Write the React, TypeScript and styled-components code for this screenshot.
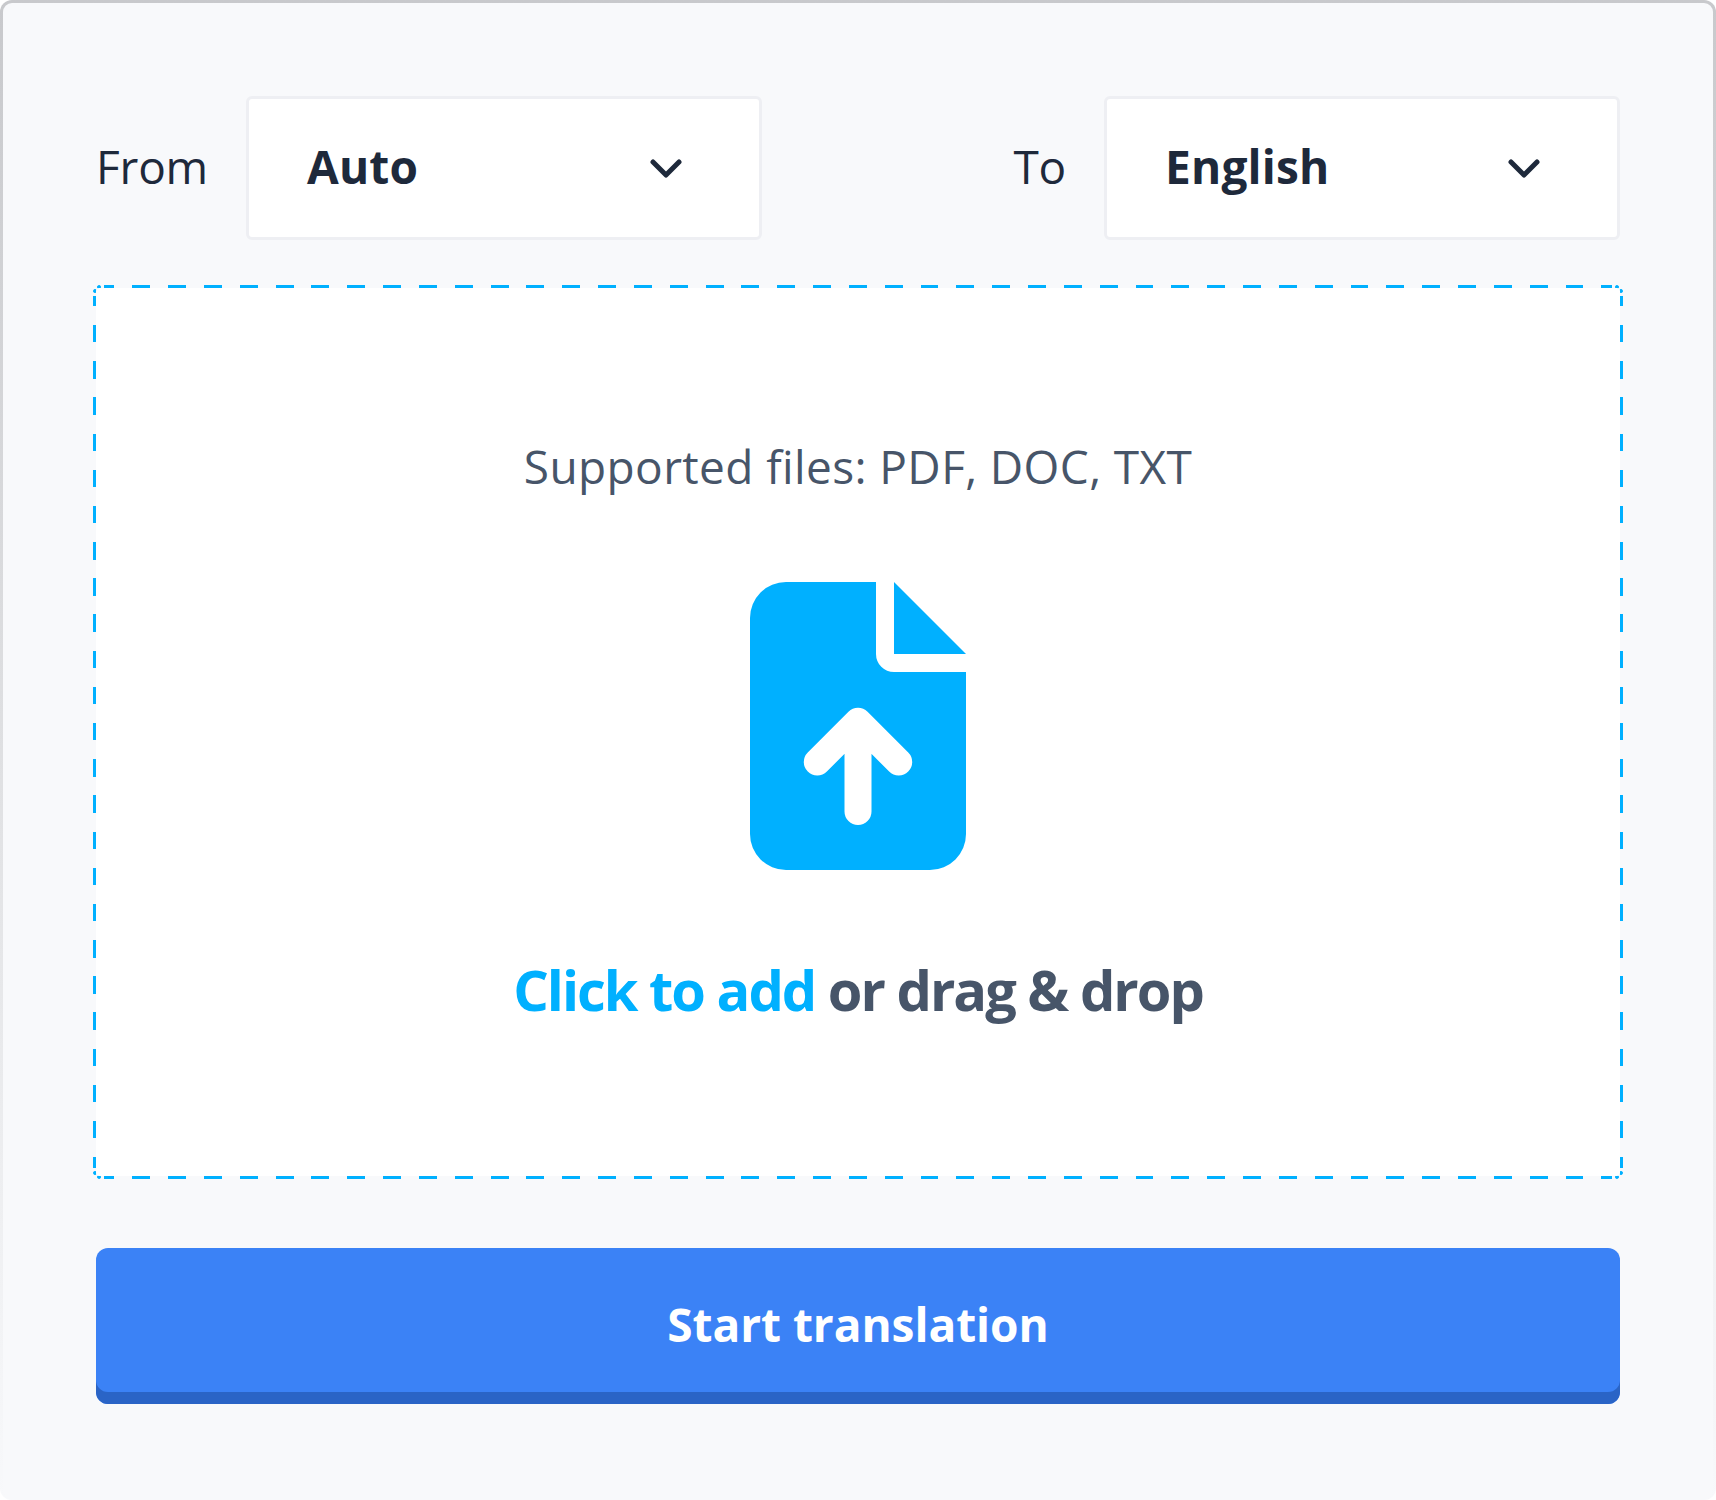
import React from "react";
import styled, { createGlobalStyle } from "styled-components";

const Global = createGlobalStyle`
  html, body { margin: 0; padding: 0; background: #ffffff; }
  * { box-sizing: border-box; }
`;

const Panel = styled.main`
  width: 1716px;
  height: 1500px;
  display: flex;
  flex-direction: column;
  padding: 93px 93px 96px;
  border: 3px solid transparent;
  border-bottom: 0;
  border-radius: 12px;
  background:
    linear-gradient(#f8f9fb, #f8f9fb) padding-box,
    linear-gradient(#c8c9cc 0%, #dfe0e2 50%, #f8f9fb 100%) border-box;
  font-family: "Open Sans", "Noto Sans", sans-serif;
`;

const SelectRow = styled.div`
  display: flex;
  justify-content: space-between;
  height: 144px;
`;

const Field = styled.div`
  width: 666px;
  display: flex;
  align-items: center;
  gap: 38px;
`;

const FieldLabel = styled.label<{ $align: "left" | "right" }>`
  flex: 1;
  min-width: 0;
  padding-bottom: 5px;
  font-size: 46px;
  letter-spacing: -0.2px;
  color: #1e293b;
  text-align: ${(p) => p.$align};
`;

const SelectBox = styled.div`
  flex: 0 0 516px;
  height: 144px;
  padding: 0 77px 0 58px;
  display: flex;
  align-items: center;
  justify-content: space-between;
  background: #ffffff;
  border: 3px solid #eeeff3;
  border-radius: 6px;
  font-size: 46px;
  font-weight: 700;
  letter-spacing: 0.2px;
  color: #1e293b;
`;

const SelectValue = styled.span`
  padding-bottom: 5px;
`;

const cornerDot = (x: string, y: string) =>
  `radial-gradient(circle at ${x} ${y}, #00b0ff 1.5px, transparent 2.3px) border-box`;

const hDash =
  "repeating-linear-gradient(90deg, #00b0ff 0 10.4px, transparent 10.4px 28.3px, #00b0ff 28.3px 35.83px)";
const vDash =
  "repeating-linear-gradient(180deg, #00b0ff 0 10.3px, transparent 10.3px 29px, #00b0ff 29px 36.18px)";

const DropZone = styled.section`
  margin: 45px -3px 69px;
  height: 894px;
  display: flex;
  flex-direction: column;
  align-items: center;
  border: 3px solid transparent;
  border-radius: 6px;
  background:
    linear-gradient(#fff, #fff) padding-box,
    ${hDash} 11px 0 / 1508px 3px no-repeat border-box,
    ${hDash} 11px 100% / 1508px 3px no-repeat border-box,
    ${vDash} 0 11px / 3px 872px no-repeat border-box,
    ${vDash} 100% 11px / 3px 872px no-repeat border-box,
    ${cornerDot("2px", "6px")},
    ${cornerDot("6px", "2px")},
    ${cornerDot("calc(100% - 2px)", "6px")},
    ${cornerDot("calc(100% - 6px)", "2px")},
    ${cornerDot("2px", "calc(100% - 6px)")},
    ${cornerDot("6px", "calc(100% - 2px)")},
    ${cornerDot("calc(100% - 2px)", "calc(100% - 6px)")},
    ${cornerDot("calc(100% - 6px)", "calc(100% - 2px)")};
`;

const Supported = styled.p`
  margin: 146px 0 0;
  font-size: 46px;
  line-height: 64px;
  letter-spacing: 0.38px;
  color: #475569;
`;

const UploadIcon = styled.svg`
  display: block;
  flex: none;
  margin-top: 84px;
`;

const DropText = styled.p`
  margin: 81px 0 0;
  font-size: 56px;
  line-height: 76px;
  font-weight: 700;
  color: #475569;
  letter-spacing: -2px;
`;

const Accent = styled.span`
  color: #00b0ff;
`;

const StartButton = styled.button`
  height: 156px;
  width: 100%;
  margin: 0;
  border: 0;
  padding: 0 0 4px;
  border-radius: 12px;
  background: #3b82f6;
  box-shadow: inset 0 -12px 0 #2a64c6;
  color: #ffffff;
  font-family: inherit;
  font-size: 46px;
  font-weight: 700;
  letter-spacing: -0.05px;
`;

const Chevron = () => (
  <svg width="32" height="19" viewBox="0 0 32 19" fill="none">
    <path d="M3 3 16 16 29 3" stroke="#1e293b" strokeWidth="5" strokeLinecap="round" strokeLinejoin="round" />
  </svg>
);

export default function App() {
  return (
    <>
      <Global />
      <Panel>
        <SelectRow>
          <Field>
            <FieldLabel $align="left">From</FieldLabel>
            <SelectBox><SelectValue>Auto</SelectValue><Chevron /></SelectBox>
          </Field>
          <Field>
            <FieldLabel $align="right">To</FieldLabel>
            <SelectBox><SelectValue>English</SelectValue><Chevron /></SelectBox>
          </Field>
        </SelectRow>
        <DropZone>
          <Supported>Supported files: PDF, DOC, TXT</Supported>
          <UploadIcon width="216" height="288" viewBox="0 0 216 288">
            <path fill="#00b0ff" d="M36 0H126V72A18 18 0 0 0 144 90H216V252A36 36 0 0 1 180 288H36A36 36 0 0 1 0 252V36A36 36 0 0 1 36 0Z" />
            <path fill="#00b0ff" d="M144 0 216 72H144Z" />
            <path fill="none" stroke="#fff" strokeWidth="27" strokeLinecap="round" strokeLinejoin="round" d="M108 229.5V139.2M67.3 180 108 139.2 148.7 180" />
          </UploadIcon>
          <DropText><Accent>Click to add</Accent> or drag &amp; drop</DropText>
        </DropZone>
        <StartButton>Start translation</StartButton>
      </Panel>
    </>
  );
}
